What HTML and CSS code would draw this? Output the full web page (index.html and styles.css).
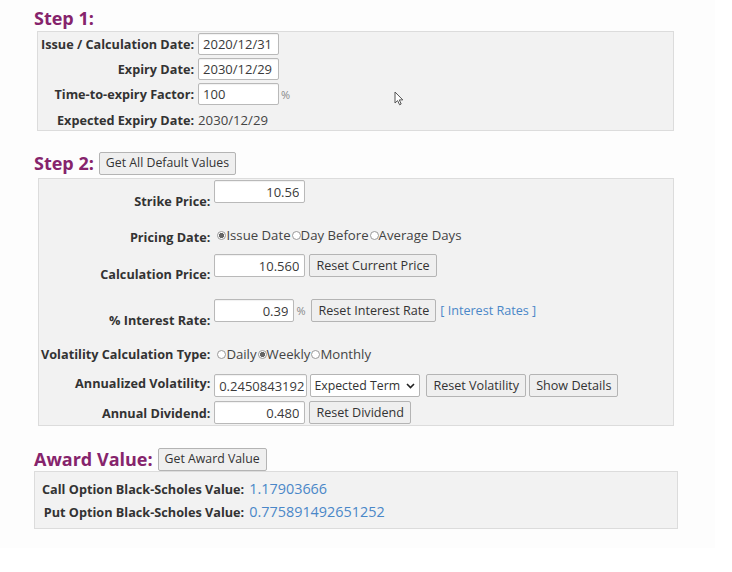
FILE: index.html
```html
<!DOCTYPE html>
<html>
<head>
<meta charset="utf-8">
<link rel="stylesheet" href="styles.css">
</head>
<body>
<div class="page">
  <h2 class="step step1">Step 1:</h2>
  <div class="box box1">
    <div class="form form1">
      <label class="lbl">Issue / Calculation Date:</label>
      <div class="cell"><input class="inp w80" value="2020/12/31"></div>
      <label class="lbl">Expiry Date:</label>
      <div class="cell"><input class="inp w80" value="2030/12/29"></div>
      <label class="lbl">Time-to-expiry Factor:</label>
      <div class="cell"><input class="inp w80" value="100"><span class="pct">%</span></div>
      <label class="lbl lbl-last">Expected Expiry Date:</label>
      <div class="cell txt lbl-last">2030/12/29</div>
    </div>
  </div>

  <div class="head-row head2">
    <h2 class="step">Step 2:</h2>
    <button class="btn">Get All Default Values</button>
  </div>
  <div class="box box2">
    <div class="form form2">
      <label class="lbl">Strike Price:</label>
      <div class="cell tall"><input class="inp w90 num" value="10.56"></div>

      <label class="lbl">Pricing Date:</label>
      <div class="cell txt r2">
        <input type="radio" name="pd" class="rad" checked>Issue Date<input type="radio" name="pd" class="rad">Day Before<input type="radio" name="pd" class="rad">Average Days
      </div>

      <label class="lbl">Calculation Price:</label>
      <div class="cell tall r3"><input class="inp w90 num" value="10.560"><button class="btn ml4">Reset Current Price</button></div>

      <label class="lbl">% Interest Rate:</label>
      <div class="cell tall"><input class="inp w81 num" value="0.39"><span class="pct">%</span><button class="btn ml6">Reset Interest Rate</button><a class="link">[ Interest Rates ]</a></div>

      <label class="lbl">Volatility Calculation Type:</label>
      <div class="cell txt">
        <input type="radio" name="vt" class="rad">Daily<input type="radio" name="vt" class="rad" checked>Weekly<input type="radio" name="vt" class="rad">Monthly
      </div>

      <label class="lbl">Annualized Volatility:</label>
      <div class="cell r6"><input class="inp w92 num" value="0.2450843192"><span class="sel-wrap"><select class="sel"><option>Expected Term</option></select><svg class="chev" width="9" height="6" viewBox="0 0 9 6"><path d="M1 1 L4.5 4.5 L8 1" fill="none" stroke="#222" stroke-width="1.6"/></svg></span><button class="btn ml6">Reset Volatility</button><button class="btn ml3">Show Details</button></div>

      <label class="lbl">Annual Dividend:</label>
      <div class="cell"><input class="inp w90 num" value="0.480"><button class="btn ml4">Reset Dividend</button></div>
    </div>
  </div>

  <div class="head-row head3">
    <h2 class="step">Award Value:</h2>
    <button class="btn">Get Award Value</button>
  </div>
  <div class="box box3">
    <div class="form form3">
      <label class="lbl">Call Option Black-Scholes Value:</label>
      <div class="cell val">1.17903666</div>
      <label class="lbl">Put Option Black-Scholes Value:</label>
      <div class="cell val">0.775891492651252</div>
    </div>
  </div>

  <svg class="cursor" width="11" height="15" viewBox="0 0 11 15"><path d="M1 1 L1 12 L3.6 9.6 L5.6 13.8 L7.2 13 L5.3 8.9 L8.8 8.9 Z" fill="#fff" stroke="#555" stroke-width="1" stroke-linejoin="round"/></svg>
</div>
</body>
</html>
```

FILE: styles.css
```css
* { box-sizing: border-box; }
html, body { margin: 0; padding: 0; background: #fff; }
body {
  font-family: "Open Sans", "Liberation Sans", sans-serif;
  font-size: 12.7px;
  color: #333;
}
.page {
  position: relative;
  width: 715px;
  height: 548px;
  background: #fdfdfd;
  padding-top: 6px;
}
.step {
  margin: 0;
  font-size: 18px;
  line-height: 24px;
  font-weight: 700;
  color: #86246c;
}
.step1 { margin-left: 34px; margin-bottom: 1px; }
.box {
  background: #f2f2f2;
  border: 1px solid #dcdcdc;
}
.box1 { margin-left: 37px; width: 637px; height: 100px; padding: 1px 0 0 3px; }
.form {
  display: grid;
  grid-template-columns: max-content 1fr;
  column-gap: 4px;
  align-items: center;
}
.form1 { row-gap: 3px; }
.lbl {
  font-weight: 700;
  font-size: 12.7px;
  text-align: right;
  white-space: nowrap;
  line-height: 20px;
  color: #333;
}
.cell { display: flex; align-items: center; white-space: nowrap; }
.txt { line-height: 20px; font-size: 13.2px; color: #444; }
.lbl-last { padding-top: 2px; }
.inp {
  height: 22px;
  border: 1px solid #b9b9b9;
  border-radius: 2px;
  background: #fff;
  font-family: inherit;
  font-size: 13px;
  color: #3a3a3a;
  padding: 0 4px;
  margin: 0;
  outline: none;
  box-shadow: inset 0 1px 1px rgba(0,0,0,0.06);
}
.box2 .inp { height: 23px; }
.inp.num { text-align: right; padding-right: 5px; }
.w80 { width: 81px; }
.w81 { width: 80px; }
.w90 { width: 91px; }
.w92 { width: 93px; padding-left: 2px !important; padding-right: 2px !important; }
.pct { color: #888; font-size: 11px; margin-left: 2px; }
.head-row {
  display: flex;
  align-items: center;
  gap: 5px;
  margin-left: 34px;
  height: 24px;
}
.head2 { margin-top: 20px; }
.head3 { margin-top: 21px; }
.btn {
  height: 23px;
  padding: 0 6px;
  background: #efefef;
  border: 1px solid #b4b4b4;
  border-radius: 2px;
  font-family: inherit;
  font-size: 12.6px;
  color: #333;
  margin: 0;
  line-height: 20px;
  white-space: nowrap;
}
.head-row .btn { font-size: 12.3px; }
.ml3 { margin-left: 3px; }
.ml4 { margin-left: 4px; }
.ml6 { margin-left: 6px; }
.box2 { margin: 3px 0 0 38px; width: 636px; padding: 1px 0 1px 2px; }
.form2 { row-gap: 3px; }
.tall { padding-bottom: 19px; }
.r3 { padding-top: 3px; }
.r2 { padding-bottom: 3px; }
.r6 { padding-top: 7px; padding-bottom: 1px; }
.rad {
  -webkit-appearance: none;
  appearance: none;
  width: 9px;
  height: 9px;
  border: 1px solid #999;
  border-radius: 50%;
  background: #fff;
  margin: 0 0 0 1px;
}
.rad:first-child { margin-left: 3px; }
.rad:checked {
  background: radial-gradient(circle, #666 0 2.3px, #fff 2.9px);
}
.link { color: #4a87c8; margin-left: 4px; font-size: 12.6px; }
.sel-wrap { position: relative; margin-left: 3px; display: inline-flex; }
.sel {
  -webkit-appearance: none;
  appearance: none;
  height: 23px;
  width: 110px;
  border: 1px solid #b4b4b4;
  border-radius: 2px;
  background: #fff;
  font-family: inherit;
  font-size: 12.3px;
  color: #333;
  padding: 0 3px;
  margin: 0;
}
.chev { position: absolute; right: 5px; top: 9px; pointer-events: none; }
.box3 { margin-left: 34px; width: 644px; height: 58px; padding: 7px 0 0 7px; }
.form3 { row-gap: 3px; column-gap: 5px; }
.val { color: #4a87c8; font-size: 14.4px; line-height: 20px; }
.cursor { position: absolute; left: 394px; top: 91px; }
```
